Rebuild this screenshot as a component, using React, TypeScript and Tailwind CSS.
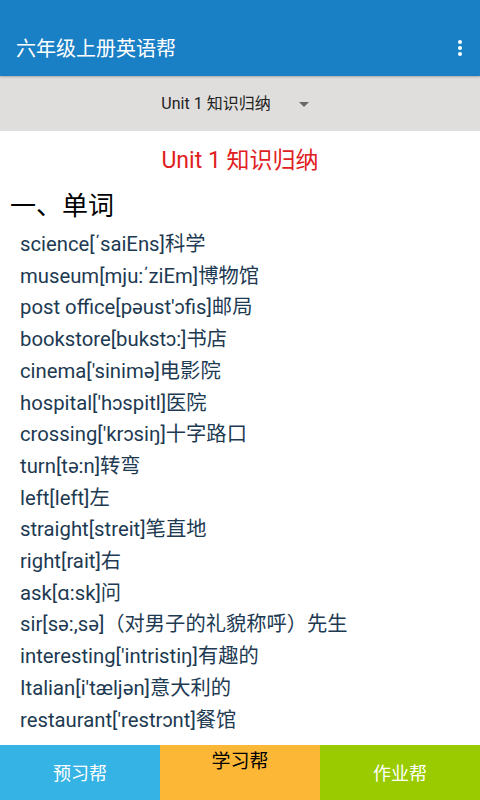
import React from "react";

const words = [
    "science[΄saiEns]科学",
    "museum[mju:΄ziEm]博物馆",
    "post office[pəust'ɔfis]邮局",
    "bookstore[bukstɔ:]书店",
    "cinema['sinimə]电影院",
    "hospital['hɔspitl]医院",
    "crossing['krɔsiŋ]十字路口",
    "turn[tə:n]转弯",
    "left[left]左",
    "straight[streit]笔直地",
    "right[rait]右",
    "ask[ɑ:sk]问",
    "sir[sə:,sə]（对男子的礼貌称呼）先生",
    "interesting['intristiŋ]有趣的",
    "Italian[i'tæljən]意大利的",
    "restaurant['restrɔnt]餐馆",
];

const font = { fontFamily: '"Roboto", "Noto Sans CJK SC", sans-serif' };

const App: React.FC = () => {
    return (
        <div className="h-screen w-full flex flex-col bg-white overflow-hidden" style={font}>
            <header className="h-[76px] shrink-0 bg-[#1a80c5] flex items-end pb-[14px] pl-4 pr-[18px] justify-between shadow-[0_1px_2px_rgba(0,0,0,0.25)] z-10">
                <span className="text-white text-[20px] leading-[26px]">六年级上册英语帮</span>
                <div className="flex flex-col gap-[2px] pb-[6px]">
                    <span className="w-[4px] h-[4px] rounded-full bg-white" />
                    <span className="w-[4px] h-[4px] rounded-full bg-white" />
                    <span className="w-[4px] h-[4px] rounded-full bg-white" />
                </div>
            </header>
            <div className="h-[55px] shrink-0 bg-[#dfdedd] flex items-center justify-center">
                <span className="text-[16px] text-[#222] ml-[-10px]">Unit 1 知识归纳</span>
                <span className="ml-[28px] mt-[2px] w-0 h-0 border-l-[5px] border-r-[5px] border-t-[5px] border-l-transparent border-r-transparent border-t-[#666]" />
            </div>
            <main className="flex-1 overflow-hidden">
                <h1 className="text-center text-[23px] text-[#e0201e] leading-[30px] mt-[15px]">Unit 1 知识归纳</h1>
                <h2 className="text-[26px] text-black leading-[34px] pl-[10px] mt-[13px]">一、单词</h2>
                <ul className="pl-[20px] mt-[6px]">
                    {words.map((w) => (
                        <li key={w} className="text-[20.3px] leading-[31.7px] text-[#1d3a52] whitespace-nowrap">
                            {w}
                        </li>
                    ))}
                </ul>
            </main>
            <nav className="h-[55px] shrink-0 grid grid-cols-3">
                <button className="bg-[#36b3e5] text-white text-[18px] flex items-center justify-center pt-[1px]">预习帮</button>
                <button className="bg-[#fcb736] text-black text-[19px] flex items-start justify-center pt-[3px]">学习帮</button>
                <button className="bg-[#99cb00] text-white text-[18px] flex items-center justify-center pt-[1px]">作业帮</button>
            </nav>
        </div>
    );
};

export default App;
